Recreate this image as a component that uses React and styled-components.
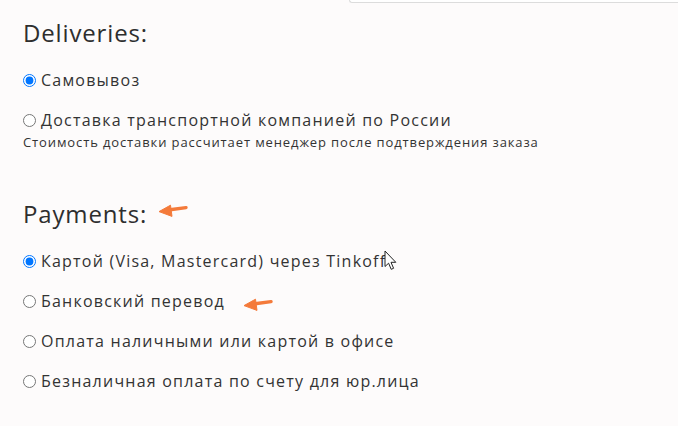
import styled, { createGlobalStyle } from "styled-components";

const Global = createGlobalStyle`
  body {
    margin: 0;
    background: #fdfbfb;
    font-family: "Open Sans", "DejaVu Sans", sans-serif;
    color: #333;
  }
`;

const Page = styled.div`
  width: 678px;
  height: 426px;
  overflow: hidden;
  background: #fdfbfb;
`;

const TopEdge = styled.div`
  margin-left: 349px;
  height: 2px;
  border-left: 1px solid #dcdcdc;
  border-bottom: 1px solid #dcdcdc;
  border-bottom-left-radius: 3px;
  background: #fff;
`;

const Content = styled.div`
  padding: 0 23px;
`;

const Heading = styled.h2`
  margin: ${(p) => p.$top}px 0 20px;
  font-size: 24px;
  line-height: 30px;
  font-weight: 400;
  letter-spacing: 0.85px;
  color: #2e2e2e;
  display: flex;
  align-items: center;
`;

const Options = styled.div`
  display: flex;
  flex-direction: column;
  gap: 16px;
`;

const Option = styled.label`
  display: flex;
  align-items: center;
  height: 24px;
  font-size: 16px;
  letter-spacing: 1.22px;
  color: #333;
  white-space: nowrap;
`;

const Radio = styled.input.attrs({ type: "radio" })`
  width: 13px;
  height: 13px;
  margin: 0 5px 0 0;
  accent-color: #0075ff;
`;

const Note = styled.div`
  margin-top: 1px;
  font-size: 13px;
  line-height: 18px;
  letter-spacing: 0.88px;
  color: #333;
  white-space: nowrap;
`;

const Pointer = styled.svg`
  display: block;
  margin-left: ${(p) => p.$gap}px;
  margin-top: ${(p) => p.$lift}px;
  flex-shrink: 0;
`;

const Cursor = styled.svg`
  display: block;
  margin-left: -2px;
  margin-top: -2px;
`;

const OrangeArrow = ({ gap, lift = 0 }) => (
  <Pointer $gap={gap} $lift={lift} width="30" height="14" viewBox="0 0 30 14">
    <path d="M28 4.6 L12 6.8" stroke="#f47a3a" strokeWidth="3.4" strokeLinecap="round" fill="none" />
    <path d="M1 8.6 L12.5 2.2 L14 13.4 Z" fill="#f47a3a" stroke="#f47a3a" strokeWidth="1" strokeLinejoin="round" />
  </Pointer>
);

export default function App() {
  return (
    <Page>
      <Global />
      <TopEdge />
      <Content>
        <Heading $top={15}>Deliveries:</Heading>
        <Options>
          <Option>
            <Radio name="delivery" defaultChecked />
            Самовывоз
          </Option>
          <div>
            <Option>
              <Radio name="delivery" />
              Доставка транспортной компанией по России
            </Option>
            <Note>Стоимость доставки рассчитает менеджер после подтверждения заказа</Note>
          </div>
        </Options>

        <Heading $top={48}>
          Payments:
          <OrangeArrow gap={11} lift={-9} />
        </Heading>
        <Options>
          <Option>
            <Radio name="payment" defaultChecked />
            Картой (Visa, Mastercard) через Tinkoff
            <Cursor width="13" height="21" viewBox="0 0 13 21">
              <path
                d="M1 1 L1 16.5 L4.6 13.2 L7.2 19.3 L9.6 18.3 L7 12.3 L11.8 12.3 Z"
                fill="#fff"
                stroke="#222"
                strokeWidth="1"
                strokeLinejoin="round"
              />
            </Cursor>
          </Option>
          <Option>
            <Radio name="payment" />
            Банковский перевод
            <OrangeArrow gap={18} lift={6} />
          </Option>
          <Option>
            <Radio name="payment" />
            Оплата наличными или картой в офисе
          </Option>
          <Option>
            <Radio name="payment" />
            Безналичная оплата по счету для юр.лица
          </Option>
        </Options>
      </Content>
    </Page>
  );
}
